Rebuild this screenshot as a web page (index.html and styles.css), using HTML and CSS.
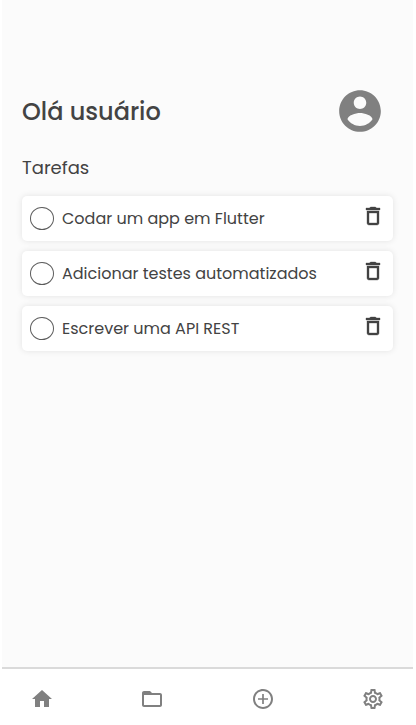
FILE: index.html
```html
<!DOCTYPE html>
<html lang="pt-BR">
<head>
<meta charset="utf-8">
<title>Tarefas</title>
<link rel="stylesheet" href="styles.css">
</head>
<body>
<svg width="0" height="0" class="defs"><symbol id="trash" viewBox="0 0 24 24"><path d="M6 19c0 1.1.9 2 2 2h8c1.1 0 2-.9 2-2V7H6v12zM8 9h8v10H8V9zm7.5-5l-1-1h-5l-1 1H5v2h14V4h-3.5z"/></symbol></svg>
<div class="app">
  <main class="content">
    <header class="header">
      <h1 class="title">Olá usuário</h1>
      <svg class="avatar" viewBox="0 0 24 24"><path d="M12 2C6.480 2 2 6.480 2 12s4.480 10 10 10 10-4.480 10-10S17.520 2 12 2zm0 3c1.660 0 3 1.340 3 3s-1.340 3-3 3-3-1.340-3-3 1.340-3 3-3zm0 14.200c-2.500 0-4.710-1.280-6-3.220.030-1.990 4-3.080 6-3.080 1.990 0 5.970 1.090 6 3.080-1.290 1.940-3.500 3.220-6 3.220z"/></svg>
    </header>
    <h2 class="subtitle">Tarefas</h2>
    <ul class="tasks">
      <li class="task"><span class="check"></span><span class="label">Codar um app em Flutter</span><svg class="trash"><use href="#trash"/></svg></li>
      <li class="task"><span class="check"></span><span class="label">Adicionar testes automatizados</span><svg class="trash"><use href="#trash"/></svg></li>
      <li class="task"><span class="check"></span><span class="label">Escrever uma API REST</span><svg class="trash"><use href="#trash"/></svg></li>
    </ul>
  </main>
  <nav class="nav">
    <svg viewBox="0 0 24 24"><path d="M10 20v-6h4v6h5v-8h3L12 3 2 12h3v8z"/></svg>
    <svg viewBox="0 0 24 24"><path d="M9.170 6l2 2H20v10H4V6h5.170M10 4H4c-1.100 0-1.990.900-1.990 2L2 18c0 1.100.900 2 2 2h16c1.100 0 2-.900 2-2V8c0-1.100-.900-2-2-2h-8l-2-2z"/><path d="M3 5h7l2 2v1H3z"/></svg>
    <svg viewBox="0 0 24 24"><path d="M12.850 7h-1.700v4.150H7v1.700h4.150V17h1.700v-4.150H17v-1.700h-4.150V7zM12 2C6.480 2 2 6.480 2 12s4.480 10 10 10 10-4.480 10-10S17.520 2 12 2zm0 18c-4.410 0-8-3.590-8-8s3.590-8 8-8 8 3.590 8 8-3.590 8-8 8z"/></svg>
    <svg viewBox="0 0 24 24"><path d="M19.430 12.980c.04-.32.07-.64.07-.98 0-.34-.03-.66-.07-.98l2.110-1.650c.19-.15.24-.42.12-.64l-2-3.460c-.09-.16-.26-.25-.44-.25-.06 0-.12.010-.17.030l-2.490 1c-.52-.4-1.080-.73-1.690-.98l-.38-2.650C14.460 2.180 14.250 2 14 2h-4c-.25 0-.46.18-.49.42l-.38 2.650c-.61.25-1.170.59-1.690.98l-2.490-1c-.06-.02-.12-.03-.18-.03-.17 0-.34.09-.43.25l-2 3.460c-.13.22-.07.49.12.64l2.110 1.650c-.04.32-.07.65-.07.98 0 .33.03.66.07.98l-2.110 1.650c-.19.15-.24.42-.12.64l2 3.460c.09.16.26.25.44.25.06 0 .12-.01.17-.03l2.490-1c.52.4 1.080.73 1.690.98l.38 2.650c.03.24.24.42.49.42h4c.25 0 .46-.18.49-.42l.38-2.650c.61-.25 1.170-.59 1.690-.98l2.490 1c.06.02.12.03.18.03.17 0 .34-.09.43-.25l2-3.460c.12-.22.07-.49-.12-.64l-2.110-1.650zm-1.980-1.710c.04.31.05.52.05.73 0 .21-.02.43-.05.73l-.14 1.130.89.7 1.080.84-.7 1.210-1.270-.51-1.040-.42-.9.68c-.43.32-.84.56-1.250.73l-1.060.43-.16 1.130-.2 1.350h-1.400l-.19-1.350-.16-1.130-1.060-.43c-.43-.18-.83-.41-1.230-.71l-.91-.7-1.060.43-1.270.51-.7-1.210 1.080-.84.89-.7-.14-1.130c-.03-.31-.05-.54-.05-.74s.02-.43.05-.73l.14-1.130-.89-.7-1.080-.84.7-1.210 1.270.51 1.040.42.9-.68c.43-.32.84-.56 1.250-.73l1.060-.43.16-1.130.2-1.350h1.390l.19 1.350.16 1.130 1.060.43c.43.18.83.41 1.230.71l.91.7 1.060-.43 1.270-.51.7 1.210-1.070.85-.89.7.14 1.130zM12 8c-2.210 0-4 1.790-4 4s1.790 4 4 4 4-1.790 4-4-1.790-4-4-4zm0 6c-1.100 0-2-.9-2-2s.9-2 2-2 2 .9 2 2-.9 2-2 2z"/></svg>
  </nav>
</div>
</body>
</html>
```
FILE: styles.css
```css
* { box-sizing: border-box; }
body {
  margin: 0;
  background: #fff;
  color: #434343;
  font-family: Poppins, Inter, sans-serif;
}
.defs { position: absolute; }
.app {
  display: flex;
  flex-direction: column;
  width: 411px;
  height: 725px;
  margin-left: 2px;
}
.content {
  flex: 1;
  padding: 86px 20px 0;
  background: #fbfbfb;
}
.header {
  display: flex;
  align-items: center;
  justify-content: space-between;
  height: 50px;
  padding-right: 8px;
}
.title {
  margin: 0;
  font-size: 24px;
  font-weight: 500;
}
.avatar { width: 50px; height: 50px; fill: #808080; }
.subtitle {
  margin: 18px 0 14px;
  font-size: 18px;
  font-weight: 400;
  line-height: 28px;
}
.tasks {
  display: flex;
  flex-direction: column;
  gap: 10px;
  margin: 0;
  padding: 0;
  list-style: none;
}
.task {
  display: flex;
  align-items: center;
  height: 45px;
  padding: 0 8px;
  border-radius: 5px;
  background: #fff;
  box-shadow: 0 0 6px rgba(0, 0, 0, 0.1);
}
.check {
  width: 24px;
  height: 23px;
  margin-right: 8px;
  border: 1px solid #5c5c5c;
  border-radius: 50%;
}
.label {
  flex: 1;
  font-size: 16px;
  white-space: nowrap;
}
.trash {
  width: 24px;
  height: 24px;
  margin-bottom: 5px;
  fill: #434343;
  stroke: #434343;
  stroke-width: 0.35px;
}
.nav {
  display: flex;
  align-items: center;
  justify-content: space-between;
  height: 58px;
  padding: 4px 28px 0;
  border-top: 2px solid #dadada;
  background: #fff;
}
.nav svg { width: 24px; height: 24px; fill: #808080; }
```
